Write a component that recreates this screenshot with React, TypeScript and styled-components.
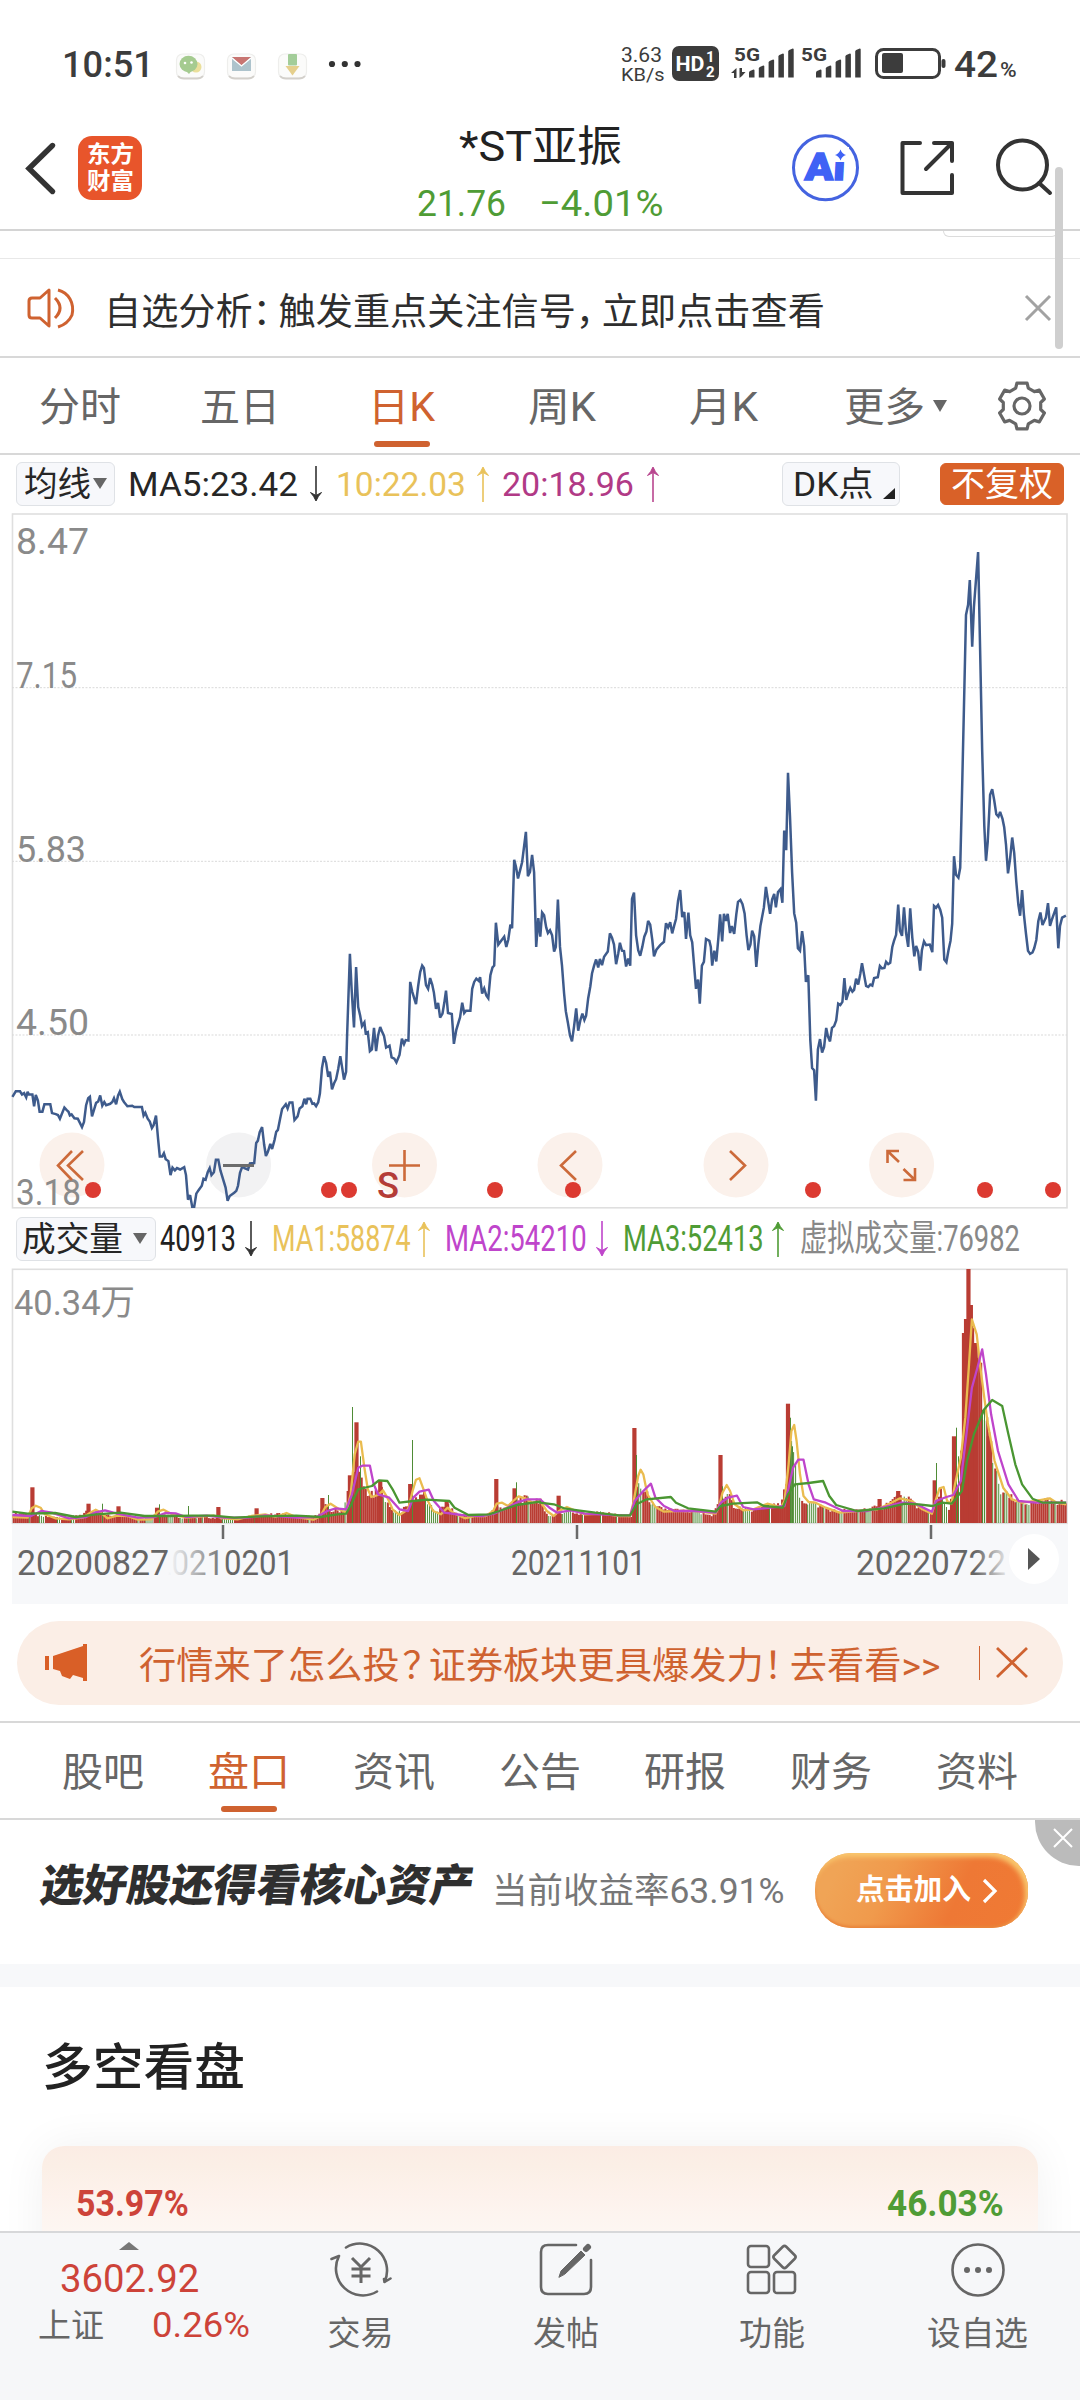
import React, { useLayoutEffect, useRef, useState } from 'react';
import styled, { createGlobalStyle } from 'styled-components';

const FONT = `Roboto, "Noto Sans CJK SC", "Noto Sans", sans-serif`;
const ORANGE = '#cf6230';
const GREY = '#666666';
const RED = '#cd4339';
const GREEN = '#4f9c35';
const YELLOW = '#e9c25a';
const MAGENTA = '#b9468f';
const VIOLET = '#bf45cb';

const Global = createGlobalStyle`
  html, body { margin: 0; padding: 0; background: #fff; }
  * { box-sizing: border-box; }
  body { font-family: ${FONT}; color: #2b2b2b; }
  svg { display: block; flex: none; }
`;

/* ---------- text that keeps an exact width ---------- */

const FitBox = styled.span<{ $w: number; $size: number; $ml: number; $color?: string; $weight: number }>`
  display: block;
  flex: none;
  width: ${p => p.$w}px;
  margin-left: ${p => p.$ml}px;
  height: ${p => Math.round(p.$size * 1.2)}px;
  line-height: ${p => Math.round(p.$size * 1.2)}px;
  font-size: ${p => p.$size}px;
  font-weight: ${p => p.$weight};
  color: ${p => p.$color ?? 'inherit'};
  white-space: nowrap;
`;
const FitInner = styled.span`
  display: inline-block;
  transform-origin: 0 70%;
`;
/* full-width punctuation set on a half-width body */
const Narrow = styled.span<{ $both: boolean }>`
  font-family: "Noto Sans CJK SC", sans-serif;
  font-feature-settings: 'halt';
  padding-right: 0.2em;
  padding-left: ${p => (p.$both ? 0.08 : 0)}em;
`;

type FitProps = {
  text: string; w: number; size: number; ml?: number; color?: string; weight?: number; skew?: number;
};
function Fit({ text, w, size, ml = 0, color, weight = 400, skew = 0 }: FitProps) {
  const ref = useRef<HTMLSpanElement>(null);
  const [k, setK] = useState(1);
  useLayoutEffect(() => {
    if (ref.current) setK(w / ref.current.offsetWidth);
  }, [text, w, size]);
  const parts = text.split(/([：，！？])/);
  return (
    <FitBox $w={w} $size={size} $ml={ml} $color={color} $weight={weight}>
      <FitInner ref={ref} style={{ transform: `scaleX(${k}) skewX(${-skew}deg)` }}>
        {parts.map((s, i) => (i % 2 ? <Narrow key={i} $both={s === '？'}>{s}</Narrow> : s))}
      </FitInner>
    </FitBox>
  );
}

/* ---------- frame ---------- */

const Screen = styled.div`
  width: 1080px;
  height: 2400px;
  display: flex;
  flex-direction: column;
  overflow: hidden;
  background: #fff;
  position: relative;
`;
const Content = styled.main`
  flex: 1;
  min-height: 0;
  overflow: hidden;
`;
const ScrollThumb = styled.div`
  position: absolute;
  left: 1055px;
  top: 167px;
  width: 8px;
  height: 182px;
  border-radius: 4px;
  background: #cfcfcf;
`;
const IconShift = styled.div<{ $ml: number }>`
  margin-left: ${p => p.$ml}px;
`;

/* ---------- status bar ---------- */

const StatusRow = styled.div`
  height: 129px;
  display: flex;
  align-items: center;
  padding-left: 62px;
  color: #3c3c3c;
`;
const Stack = styled.div<{ $ml: number }>`
  margin-left: ${p => p.$ml}px;
  display: flex;
  flex-direction: column;
  justify-content: center;
  height: 44px;
  span { height: 20px; line-height: 20px; }
`;
const Pct = styled.div`
  padding-top: 10px;
`;

function NotifyIcons() {
  return (
    <svg width="190" height="40" viewBox="172 45 190 40">
      <g stroke="#eeeeec" strokeWidth="1.2" fill="#fbfbfa">
        <rect x="176.500" y="54" width="28" height="24" rx="6" />
        <rect x="227.500" y="54" width="28" height="24" rx="6" />
        <rect x="278.500" y="54" width="28" height="24" rx="6" />
      </g>
      <path d="M178 76q2 2.500 6 2.500h13q4 0 6 -2.500M229 76q2 2.500 6 2.500h13q4 0 6 -2.500M280 76q2 2.500 6 2.500h13q4 0 6 -2.500" stroke="#d3d0cb" strokeWidth="1.800" fill="none" />
      <circle cx="196" cy="67" r="5.500" fill="#eadf9b" />
      <ellipse cx="188.500" cy="64" rx="9" ry="8.300" fill="#a5cb90" />
      <path d="M185 70l4 4l3 -4z" fill="#a5cb90" />
      <circle cx="185" cy="63" r="1.300" fill="#fff" />
      <circle cx="191.500" cy="62.500" r="1.300" fill="#fff" />
      <rect x="232" y="57" width="19" height="14" fill="#adc3cc" />
      <path d="M232 57h19l-9.500 8.500z" fill="#c87572" />
      <path d="M232 58l9.500 8l9.500 -8" stroke="#fff" strokeWidth="1.300" fill="none" />
      <rect x="288" y="54" width="9" height="11.500" rx="1" fill="#a3cd99" />
      <path d="M285.500 66h14l-7 9.500z" fill="#e5cf8c" />
      <g fill="#333">
        <circle cx="332" cy="64" r="3.100" />
        <circle cx="344.800" cy="64" r="3.100" />
        <circle cx="357.500" cy="64" r="3.100" />
      </g>
    </svg>
  );
}

function SignalIcons() {
  const bars = (x: number) =>
    [8, 12, 18, 24, 29].map((h, i) => (
      <path key={i} d={`M${x + i * 9.8} ${78.500 - h + 2}q0 -1 1 -1.500l3.500 -1.500q1 0 1 1v${h - 1}h-5.500z`} />
    ));
  return (
    <svg width="280" height="44" viewBox="670 43 280 44" fill="#3c3c3c">
      <rect x="672" y="46" width="47" height="35" rx="7" />
      <g fill="#fff" fontFamily={FONT} fontWeight="700">
        <text x="675.500" y="71" fontSize="21" textLength="29" lengthAdjust="spacingAndGlyphs">HD</text>
        <text x="706" y="62" fontSize="15">1</text>
        <text x="706" y="77" fontSize="15">2</text>
      </g>
      <g fontFamily={FONT} fontWeight="700" fontSize="19">
        <text x="734" y="61" textLength="26" lengthAdjust="spacingAndGlyphs">5G</text>
        <text x="801" y="61" textLength="26" lengthAdjust="spacingAndGlyphs">5G</text>
      </g>
      <path d="M736.500 68v10h-2.500v-5h-3zM739.500 78v-10h2.500v4h3.500l-3.500 4z" />
      {bars(749)}
      {bars(816)}
      <rect x="876.500" y="49.500" width="63" height="28" rx="7" fill="none" stroke="#3c3c3c" strokeWidth="3" />
      <rect x="882" y="53" width="21" height="20" rx="2" />
      <rect x="941.500" y="59" width="4" height="9" rx="2" />
    </svg>
  );
}

function StatusBar() {
  return (
    <StatusRow>
      <Fit text="10:51" w={92} size={37} weight={500} />
      <IconShift $ml={18}><NotifyIcons /></IconShift>
      <Stack $ml={259}>
        <Fit text="3.63" w={41} size={20} />
        <Fit text="KB/s" w={43} size={19} />
      </Stack>
      <IconShift $ml={6}><SignalIcons /></IconShift>
      <Fit text="42" w={44} size={37} ml={4} weight={500} />
      <Pct><Fit text="%" w={17} size={20} ml={2} weight={500} /></Pct>
    </StatusRow>
  );
}

/* ---------- header ---------- */

const HeaderRow = styled.header`
  height: 102px;
  border-bottom: 2px solid #d4d4d4;
  display: grid;
  grid-template-columns: 396px 288px 396px;
`;
const HeaderSide = styled.div<{ $pl: number; $gap: number }>`
  display: flex;
  align-items: center;
  height: 77px;
  padding-left: ${p => p.$pl}px;
  gap: ${p => p.$gap}px;
`;
const HeaderMid = styled.div`
  padding-left: 21px;
`;
const TitleLine = styled.div`
  height: 36px;
  padding-left: 42px;
  display: flex;
  align-items: center;
  color: #222;
`;
const PriceLine = styled.div`
  height: 77px;
  display: flex;
  align-items: center;
  color: ${GREEN};
`;
const Logo = styled.div`
  width: 64px;
  height: 64px;
  border-radius: 14px;
  background: #e8552b;
  color: #fff;
  display: flex;
  flex-direction: column;
  align-items: center;
  justify-content: center;
  span { height: 27px; line-height: 27px; }
`;

function AiIcon() {
  return (
    <svg width="68" height="68" viewBox="791 133 68 68">
      <circle cx="825.500" cy="166.800" r="32" fill="none" stroke="#4463e0" strokeWidth="3" />
      <g transform="translate(825 179) skewX(-3)">
        <text x="-20.500" y="0" fontFamily={FONT} fontWeight="900" fontSize="38" fill="#4062f5" stroke="#4062f5" strokeWidth="1.500" textLength="40" lengthAdjust="spacingAndGlyphs">Ai</text>
      </g>
      <rect x="833" y="146" width="16" height="15" fill="#fff" />
      <path d="M840.500 148.500q1.500 4.300 5.500 5.500q-4 1.300 -5.500 5.500q-1.500 -4.200 -5.500 -5.500q4 -1.200 5.500 -5.500z" fill="#4062f5" />
    </svg>
  );
}

function Header() {
  return (
    <HeaderRow>
      <HeaderSide $pl={20} $gap={18}>
        <svg width="40" height="60" viewBox="20 137 40 60">
          <path d="M52.500 144.500L29 167.500L52.500 190.500" fill="none" stroke="#333" strokeWidth="5.400" strokeLinecap="round" />
        </svg>
        <Logo>
          <Fit text="东方" w={47} size={23} weight={700} />
          <Fit text="财富" w={47} size={23} weight={700} />
        </Logo>
      </HeaderSide>
      <HeaderMid>
        <TitleLine><Fit text="*ST亚振" w={163} size={42} /></TitleLine>
        <PriceLine>
          <Fit text="21.76" w={89} size={37} />
          <Fit text="−4.01%" w={124} size={37} ml={33} />
        </PriceLine>
      </HeaderMid>
      <HeaderSide $pl={107} $gap={0}>
        <AiIcon />
        <IconShift $ml={38}>
          <svg width="60" height="60" viewBox="897 137 60 60" fill="none" stroke="#333" strokeWidth="4" strokeLinecap="round" strokeLinejoin="round">
            <path d="M920 142H902.500V192H952V174M934 142H952V160M952 142L926 168" />
          </svg>
        </IconShift>
        <IconShift $ml={36}>
          <svg width="62" height="62" viewBox="993 136 62 62" fill="none" stroke="#333" strokeWidth="4" strokeLinecap="round">
            <circle cx="1022.500" cy="164" r="24.500" />
            <path d="M1039 182L1050 192" />
          </svg>
        </IconShift>
      </HeaderSide>
    </HeaderRow>
  );
}

/* ---------- alert ---------- */

const Strip = styled.div`
  height: 28px;
  border-bottom: 1px solid #e8e8e8;
  padding-left: 943px;
`;
const StripTab = styled.div`
  width: 115px;
  height: 6px;
  border: 1px solid #dcdcdc;
  border-top: 0;
  border-radius: 0 0 6px 6px;
`;
const AlertRow = styled.div`
  height: 99px;
  border-bottom: 2px solid #d8d8d8;
  display: flex;
  align-items: center;
  padding-left: 24px;
`;
const AlertText = styled.div`
  padding-top: 3px;
`;
function Alert() {
  return (
    <AlertRow>
      <svg width="54" height="48" viewBox="24 284 54 48" fill="none" stroke={ORANGE} strokeWidth="3">
        <path d="M49 290L40 298H32q-3 0 -3 3V315q0 3 3 3H40L49 326Z" strokeLinejoin="round" />
        <path d="M55 298q10 10 0 20M58 290q8 2 12 9t2 16q-4 9 -14 12" />
      </svg>
      <AlertText>
        <Fit text="自选分析：触发重点关注信号，立即点击查看" w={721} size={37} ml={26} color="#2e2e2e" />
      </AlertText>
      <IconShift $ml={196}>
        <svg width="34" height="30" viewBox="1021 293 34 30" stroke="#a2a2a2" strokeWidth="3">
          <path d="M1026 296L1050 320M1050 296L1026 320" />
        </svg>
      </IconShift>
    </AlertRow>
  );
}

/* ---------- period tabs ---------- */

const TabRow = styled.nav<{ $pl: number }>`
  height: 97px;
  border-bottom: 2px solid #d8d8d8;
  display: flex;
  align-items: center;
  padding-left: ${p => p.$pl}px;
  color: ${GREY};
`;
const TabItem = styled.div<{ $ml: number; $active?: boolean }>`
  position: relative;
  height: 95px;
  padding-top: 26px;
  margin-left: ${p => p.$ml}px;
  color: ${p => (p.$active ? ORANGE : 'inherit')};
  &::after {
    content: '';
    display: ${p => (p.$active ? 'block' : 'none')};
    position: absolute;
    left: 50%;
    margin-left: -28px;
    bottom: 6px;
    width: 56px;
    height: 6px;
    border-radius: 3px;
    background: ${ORANGE};
  }
`;
const periods: [string, number, number][] = [
  ['分时', 82, 0], ['五日', 80, 79], ['日K', 67, 88], ['周K', 68, 93], ['月K', 69, 93], ['更多', 81, 86],
];
const GEAR = (() => {
  const out: string[] = [];
  for (let i = 0; i < 6; i++) {
    const a = (i * 60 - 90) * Math.PI / 180;
    [[-0.22, 23.500], [0.22, 23.500], [0.34, 19], [0.71, 19]].forEach(([d, r]) =>
      out.push(`${(r * Math.cos(a + d)).toFixed(1)},${(r * Math.sin(a + d)).toFixed(1)}`));
  }
  return out.join(' ');
})();
function PeriodTabs() {
  return (
    <TabRow $pl={39}>
      {periods.map(([t, w, ml]) => (
        <TabItem key={t} $ml={ml} $active={t === '日K'}><Fit text={t} w={w} size={40} /></TabItem>
      ))}
      <IconShift $ml={8}>
        <svg width="14" height="12" viewBox="0 0 14 12"><path d="M0 0H14L7 12Z" fill={GREY} /></svg>
      </IconShift>
      <IconShift $ml={48}>
        <svg width="54" height="54" viewBox="-27 -27 54 54" fill="none" stroke={GREY} strokeWidth="3.200" strokeLinejoin="round">
          <polygon points={GEAR} />
          <circle r="8" />
        </svg>
      </IconShift>
    </TabRow>
  );
}

/* ---------- indicator rows ---------- */

const IndicatorRow = styled.div`
  height: 58px;
  display: flex;
  align-items: center;
  padding-left: 16px;
`;
const Chip = styled.div<{ $w: number; $ml?: number; $solid?: boolean }>`
  width: ${p => p.$w}px;
  height: ${p => (p.$solid ? 42 : 44)}px;
  margin-left: ${p => p.$ml ?? 0}px;
  flex: none;
  border-radius: 6px;
  border: 1px solid ${p => (p.$solid ? '#d96128' : '#dfe2e6')};
  background: ${p => (p.$solid ? '#d96128' : '#f7f8fb')};
  color: ${p => (p.$solid ? '#fff' : '#262626')};
  display: flex;
  align-items: center;
  padding-left: ${p => (p.$solid ? 10 : 7)}px;
`;
const CornerMark = styled.div`
  margin-left: 9px;
  padding-top: 19px;
`;
function Caret({ ml }: { ml: number }) {
  return (
    <IconShift $ml={ml}>
      <svg width="14" height="12" viewBox="0 0 14 12"><path d="M0 0H14L7 11Z" fill={GREY} /></svg>
    </IconShift>
  );
}
function Arrow({ up, color, ml }: { up?: boolean; color: string; ml: number }) {
  return (
    <IconShift $ml={ml}>
      <svg width="14" height="40" viewBox="-7 0 14 40">
        <g transform={up ? 'rotate(180 0 20)' : undefined}>
          <path d="M0 2V36" stroke={color} strokeWidth="1.600" />
          <path d="M-5.500 28.500Q-2 32 0 37Q2 32 5.500 28.500L0 31.500Z" fill={color} stroke={color} strokeWidth="1" />
        </g>
      </svg>
    </IconShift>
  );
}
function MaRow() {
  return (
    <IndicatorRow>
      <Chip $w={99}><Fit text="均线" w={67} size={34} /><Caret ml={2} /></Chip>
      <Fit text="MA5:23.42" w={170} size={34} ml={13} color="#262626" />
      <Arrow color="#333" ml={11} />
      <Fit text="10:22.03" w={130} size={34} ml={13} color={YELLOW} />
      <Arrow up color={YELLOW} ml={10} />
      <Fit text="20:18.96" w={132} size={34} ml={12} color="#b13a86" />
      <Arrow up color={MAGENTA} ml={12} />
      <Chip $w={118} $ml={122}>
        <Fit text="DK点" w={81} size={34} ml={3} />
        <CornerMark><svg width="12" height="11" viewBox="0 0 12 11"><path d="M12 0V11H0Z" fill="#222" /></svg></CornerMark>
      </Chip>
      <Chip $w={124} $ml={40} $solid><Fit text="不复权" w={102} size={34} /></Chip>
    </IndicatorRow>
  );
}
function VolumeLegend() {
  return (
    <IndicatorRow>
      <Chip $w={140}><Fit text="成交量" w={101} size={34} ml={-2} /><Caret ml={10} /></Chip>
      <Fit text="40913" w={76} size={37} ml={4} color="#222" />
      <Arrow color="#333" ml={8} />
      <Fit text="MA1:58874" w={139} size={37} ml={14} color={YELLOW} />
      <Arrow up color={YELLOW} ml={6} />
      <Fit text="MA2:54210" w={142} size={37} ml={14} color={VIOLET} />
      <Arrow color={VIOLET} ml={8} />
      <Fit text="MA3:52413" w={141} size={37} ml={14} color={GREEN} />
      <Arrow up color={GREEN} ml={7} />
      <Fit text="虚拟成交量:76982" w={220} size={36} ml={15} color="#888" />
    </IndicatorRow>
  );
}

/* ---------- price chart ---------- */

const PRICE_A = '36,1282 46,1270 58,1270 64,1277 70,1274 76,1283 80,1271 84,1277 94,1277 99,1302 104,1278 110,1290 115,1314 123,1314 129,1298 146,1298 151,1317 162,1319 168,1321 174,1329 187,1305 193,1310 199,1314 203,1322 208,1320 216,1328 226,1329 238,1347 244,1336 250,1300 256,1285 261,1282 267,1324 273,1310 279,1295 285,1292 291,1279 297,1301 303,1293 308,1300 320,1297 326,1293 331,1285 337,1298 343,1279 348,1271 355,1287 360,1293 370,1302 384,1301 390,1304 412,1304 417,1322 422,1316 429,1329 435,1335 441,1349 446,1343 453,1322 459,1373 464,1410 471,1410 476,1403 481,1416 489,1420 495,1450 501,1434 508,1440 514,1435 523,1438 535,1433 540,1450 546,1503 552,1493 558,1518 564,1518 570,1490 576,1483 586,1473 591,1458 597,1460 603,1444 609,1435 614,1450 621,1444 627,1417 634,1417 640,1440 655,1477 661,1505 667,1495 680,1488 686,1484 691,1473 697,1445 704,1431 710,1435 720,1438 726,1425 738,1424 744,1381 749,1376 754,1358 761,1347 767,1384 772,1409 778,1400 785,1383 790,1394 797,1375 802,1357 807,1353 813,1330 819,1308 830,1298 835,1307 841,1294 849,1294 855,1332 864,1324 870,1307 878,1302 884,1286 889,1298 893,1286 901,1286 907,1297 912,1296 918,1302 924,1294 929,1275 935,1220 941,1195 947,1209 953,1239 958,1228 964,1266 970,1253 976,1244 982,1222 988,1195 993,1217 999,1245 1005,1228 1008,1150 1016,975 1021,1050 1028,1133 1034,1003 1040,1089 1046,1108 1051,1130 1058,1122 1062,1145 1068,1143 1074,1184 1080,1180 1086,1134 1092,1184 1098,1150 1104,1132 1109,1141 1115,1151 1121,1176 1131,1172 1137,1197 1145,1200 1151,1208 1160,1192 1167,1157 1173,1169 1178,1160 1186,1161 1191,1035 1197,1056 1208,1083 1214,1045 1220,1014 1226,1000 1231,1005 1237,1042 1243,1050 1249,1027 1255,1041 1260,1058 1266,1093 1272,1080 1278,1112 1285,1103 1290,1080 1295,1054 1301,1102 1312,1104 1318,1168 1325,1138 1336,1111 1342,1080 1348,1102 1353,1097 1366,1097 1371,1050 1377,1035 1383,1028 1390,1033 1394,1025 1400,1060 1406,1049 1412,1064 1418,1070 1424,1021 1430,1004 1435,1000 1440,908 1447,955 1458,944 1464,938 1470,960 1476,944 1482,912 1487,920 1493,773 1498,787 1504,813 1510,796 1516,778 1527,713 1533,808 1539,799 1545,762 1551,800 1557,960 1563,898';
const PRICE_B = '1,938 6,886 12,892 18,918 23,930 29,924 35,935 41,970 46,960 52,858 58,960 64,1000 70,1060 75,1098 81,1123 87,1150 93,1163 99,1130 105,1092 111,1140 117,1118 123,1103 129,1117 134,1108 140,1070 146,1045 151,1017 157,1000 163,987 169,1004 174,986 180,999 186,981 197,970 203,931 209,940 215,955 221,997 227,975 232,951 238,968 244,969 250,1002 256,985 262,1000 267,857 273,843 279,935 285,967 291,979 297,960 303,938 309,927 314,904 320,912 326,945 331,980 338,966 349,956 360,949 366,909 372,918 378,907 384,931 390,913 395,900 401,860 407,838 413,896 419,885 424,943 431,886 436,935 442,950 448,1005 453,1050 459,1030 464,1082 470,1000 476,992 482,943 492,947 496,960 500,1000 506,968 512,991 518,940 523,890 529,948 534,889 540,904 545,889 552,930 557,915 564,932 570,890 575,863 582,859 588,868 594,888 600,935 605,967 611,955 616,925 622,937 628,1003 634,955 640,915 650,875 656,831 662,860 668,889 674,858 680,846 685,875 691,842 698,836 704,865 709,710 715,752 720,586 726,680 732,800 738,888 744,908 749,963 755,968 761,926 767,958 772,1035 779,1021 785,1160 790,1220 796,1225 801,1290 807,1180 813,1158 819,1187 825,1175 831,1134 836,1152 842,1163 848,1134 854,1130 860,1118 866,1082 872,1085 878,1078 884,1027 889,1074 895,1060 901,1048 907,1056 912,1052 918,1028 924,1041 930,1018 935,995 941,1020 947,1044 953,1046 959,1041 965,1043 970,1027 981,1025 987,1001 993,1006 1000,1005 1005,992 1011,997 1017,994 1023,960 1028,947 1034,934 1040,869 1045,925 1051,936 1057,875 1063,930 1069,960 1075,877 1081,940 1087,980 1092,958 1098,970 1104,1011 1109,967 1115,948 1121,956 1132,955 1139,971 1144,872 1150,876 1156,870 1162,880 1168,897 1174,987 1180,993 1186,968 1192,947 1197,910 1202,765 1208,805 1215,811 1220,790 1225,640 1231,450 1237,247 1243,225 1248,172 1255,315 1260,230 1272,112 1278,320 1284,540 1290,700 1295,775 1300,735 1307,633 1313,621 1319,645 1325,675 1331,680 1336,670 1343,685 1348,703 1353,740 1359,802 1365,770 1371,725 1377,758 1383,820 1389,870 1394,893 1400,838 1405,890 1411,930 1417,968 1423,975 1430,972 1435,963 1441,945 1447,905 1453,886 1459,913 1469,897 1475,866 1481,915 1487,900 1499,875 1505,963 1510,915 1516,897 1527,893';

const SX = 540 / 1568;
/* joins the two halves of a series into one list of screen points */
function series(a: string, b: string, y0: number, ky: number): [number, number][] {
  const read = (s: string, dx: number) =>
    s.split(' ').map(p => {
      const [x, y] = p.split(',').map(Number);
      return [x * SX + dx, y0 + y * ky] as [number, number];
    });
  return [...read(a, 0), ...read(b, 540)];
}
const toPoints = (list: [number, number][]) => list.map(p => `${p[0].toFixed(1)},${p[1].toFixed(1)}`).join(' ');
const pricePoints = toPoints(series(PRICE_A, PRICE_B, 500, 730 / 1568));

const labels: [string, number, number][] = [
  ['8.47', 554, 73], ['7.15', 688, 61], ['5.83', 862, 70], ['4.50', 1035, 73], ['3.18', 1205, 65],
];

function PriceChart() {
  return (
    <svg width="1080" height="697" viewBox="0 513 1080 697" fontFamily={FONT}>
      <rect x="12.500" y="514" width="1054.500" height="693.800" fill="none" stroke="#dfdfdf" strokeWidth="1.600" />
      {[687.700, 861.300, 1035].map(y => (
        <path key={y} d={`M12 ${y}H1067`} stroke="#d9d9d9" strokeWidth="1" strokeDasharray="2 1.500" />
      ))}
      {[72, 238.600, 404.500, 570, 736, 901.600].map((x, i) => (
        <circle key={x} cx={x} cy="1165" r="32.500" fill={i === 1 ? '#f2f2f3' : '#fbf1eb'} />
      ))}
      {labels.map(([t, y, w]) => (
        <text key={t} x="16" y={y} fontSize="37.500" fill="#8a8a8a" textLength={w} lengthAdjust="spacingAndGlyphs">{t}</text>
      ))}
      <polyline points={pricePoints} fill="none" stroke="#3e5b8c" strokeWidth="2.500" strokeLinejoin="miter" strokeMiterlimit="3" />
      <g fill="none" stroke="#cc6a3a" strokeWidth="2.600">
        <path d="M72 1151L58 1165.500L72 1180M83 1151L68 1165.500L83 1180" />
        <path d="M389 1165.500H420M404.500 1150V1181" />
        <path d="M576 1151L561 1165.500L576 1180" />
        <path d="M730 1151L745 1165.500L730 1180" />
        <path d="M887.500 1163V1151H899M887.500 1151L899 1162M915 1168V1180H903.500M915 1180L903.500 1169" />
      </g>
      <path d="M223 1165.500H254" stroke="#6c6c6c" strokeWidth="3" />
      {[93, 329, 349, 495, 573, 813, 985, 1053].map(x => (
        <circle key={x} cx={x} cy="1190" r="8" fill="#dc3a31" />
      ))}
      <text x="377" y="1198" fontSize="37" fontWeight="500" fill="#b43c37" textLength="22" lengthAdjust="spacingAndGlyphs">S</text>
    </svg>
  );
}

/* ---------- volume chart ---------- */

const envelope: [number, number][] = [
  [36, 30], [90, 30], [120, 20], [200, 16], [250, 34], [290, 30], [330, 24], [370, 24], [420, 14], [450, 30], [490, 24], [530, 16], [600, 18], [650, 12], [700, 18], [760, 24], [820, 30], [860, 18], [915, 22], [940, 54], [960, 38], [995, 40], [1010, 110], [1030, 170], [1060, 100], [1080, 84], [1110, 105], [1125, 50], [1140, 38], [1165, 38], [1190, 66], [1225, 96], [1245, 54], [1265, 38], [1295, 54], [1330, 24], [1410, 26], [1440, 48], [1480, 54], [1500, 76], [1530, 74], [1568, 74],
  [1575, 34], [1600, 22], [1650, 36], [1700, 26], [1730, 34], [1770, 28], [1830, 20], [1840, 95], [1850, 125], [1878, 84], [1900, 48], [1960, 40], [2010, 34], [2065, 24], [2085, 64], [2110, 94], [2130, 48], [2190, 40], [2220, 54], [2260, 54], [2285, 165], [2300, 235], [2318, 94], [2330, 70], [2380, 54], [2420, 38], [2500, 42], [2560, 50], [2600, 80], [2640, 70], [2670, 46], [2705, 32], [2716, 84], [2730, 94], [2750, 34], [2768, 104], [2785, 115], [2796, 500], [2815, 620], [2845, 470], [2858, 320], [2880, 210], [2900, 105], [2930, 80], [2950, 68], [3000, 62], [3050, 72], [3098, 60],
];
const spikes: Record<string, number> = {
  94: 107, 257: 58, 344: 50, 456: 46, 634: 48, 745: 44, 936: 75, 1016: 143, 1035: 302, 1104: 128, 1191: 117, 1297: 68, 1441: 132, 1494: 104,
  1622: 82, 1842: 285, 2092: 204, 2288: 358, 2554: 72, 2608: 96, 2714: 128, 2770: 260, 2799: 570, 2805: 612, 2812: 762, 2819: 654, 2833: 540, 2871: 260,
};
const greenSpikes: Record<string, number> = {
  298: 58, 547: 51, 463: 56, 954: 84, 1023: 348, 1047: 200, 1198: 249, 1499: 122, 1849: 204, 2097: 110, 2295: 316, 2301: 230, 2719: 180, 2777: 286, 2783: 200, 2853: 340, 2859: 340,
};
const greenRuns: [number, number][] = [
  [112, 126], [160, 174], [206, 218], [420, 442], [486, 500], [520, 530], [640, 668], [1110, 1122], [1140, 1162], [1234, 1270], [1360, 1366], [1585, 1600], [1630, 1660], [1852, 1862], [1888, 1902], [2006, 2040], [2156, 2172], [2296, 2322], [2342, 2368], [2510, 2526], [2616, 2630], [2730, 2744], [2850, 2862], [2892, 2905], [2912, 2926], [2950, 2962], [2975, 2990],
];
function envAt(x: number) {
  for (let i = 1; i < envelope.length; i++) {
    if (x <= envelope[i][0]) {
      const [x0, h0] = envelope[i - 1];
      const [x1, h1] = envelope[i];
      return h0 + ((h1 - h0) * (x - x0)) / (x1 - x0);
    }
  }
  return 58;
}
const noise = (i: number) => {
  const v = Math.sin(i * 12.9898) * 43758.5453;
  return v - Math.floor(v);
};
type Bar = { x: number; w: number; h: number; green: boolean };
const bars: Bar[] = [];
for (let i = 0, x = 37; x < 3092; x += 5.84, i++) {
  const green = greenRuns.some(([a, b]) => x >= a && x <= b) || noise(i + 700) > 0.93;
  const h = envAt(x) * (0.78 + 0.34 * noise(i));
  bars.push({ x: x * SX, w: green ? 1 : 2.05, h: h / 3, green });
}
Object.entries(spikes).forEach(([x, h]) => bars.push({ x: (Number(x) - 6) * SX, w: 4.200, h: h / 3, green: false }));
Object.entries(greenSpikes).forEach(([x, h]) => bars.push({ x: Math.round((Number(x) - 1) * SX), w: 1, h: h / 3, green: true }));

const MA_YELLOW = series(
  '36,948 80,950 92,922 104,914 118,920 130,940 160,952 200,955 240,950 262,935 278,926 292,934 312,952 340,944 370,945 400,956 440,955 458,932 475,926 500,940 540,950 590,946 620,944 650,952 690,955 730,945 770,940 800,948 832,936 860,948 910,956 930,946 945,918 960,908 985,925 1005,935 1018,880 1030,760 1040,722 1048,722 1058,800 1068,865 1078,888 1098,882 1112,868 1125,890 1140,925 1160,942 1185,925 1198,870 1208,836 1218,832 1228,860 1240,895 1258,930 1280,940 1300,920 1315,935 1350,952 1380,945 1410,945 1432,930 1442,908 1458,905 1475,915 1490,900 1506,886 1525,892 1545,905 1568,900',
  '20,930 40,945 55,930 78,918 100,928 130,940 180,938 230,945 262,945 272,900 285,825 292,806 300,820 312,880 335,918 360,932 400,930 450,930 510,938 520,915 530,875 542,852 552,870 565,910 590,928 620,925 660,908 700,918 710,900 722,790 730,690 738,672 745,720 755,820 765,885 780,903 800,905 830,920 870,935 920,930 980,925 1020,905 1045,892 1080,900 1110,925 1138,938 1150,895 1160,862 1172,858 1182,900 1195,908 1205,850 1222,770 1235,650 1245,500 1254,355 1268,400 1280,510 1290,590 1300,665 1320,780 1345,860 1370,895 1400,905 1440,900 1480,892 1500,905 1528,910',
  1200, 1 / 3);
const MA_VIOLET = series(
  '36,942 90,945 120,930 150,935 200,952 250,948 275,935 305,928 340,938 400,950 450,948 480,936 510,937 540,948 600,944 650,950 720,950 770,943 860,950 920,948 950,930 975,922 1005,925 1022,880 1040,800 1052,794 1074,794 1085,850 1098,880 1130,890 1160,925 1185,930 1200,890 1218,872 1245,866 1260,900 1290,935 1340,942 1400,945 1435,938 1470,922 1500,905 1530,895 1568,895',
  '30,922 50,935 90,928 130,938 230,943 262,943 275,900 300,870 322,848 335,890 360,915 390,930 450,930 510,935 525,905 545,890 572,884 590,918 620,925 670,920 710,915 722,860 735,800 750,776 765,776 780,850 795,895 830,905 880,930 950,930 1000,918 1050,905 1090,908 1138,932 1150,900 1180,888 1200,882 1222,840 1238,700 1254,560 1270,500 1284,445 1295,520 1310,640 1330,750 1360,850 1390,900 1440,905 1528,905',
  1200, 1 / 3);
const MA_GREEN = series(
  '36,932 80,938 160,936 220,948 280,940 350,935 420,945 500,945 560,944 620,944 680,950 760,946 860,944 930,948 980,940 1005,938 1020,910 1040,865 1080,855 1100,838 1125,840 1140,865 1160,905 1200,900 1240,896 1305,900 1320,920 1360,942 1420,940 1450,930 1500,912 1568,902',
  '0,905 40,910 70,922 110,928 160,935 230,943 262,943 280,910 310,895 380,888 395,905 430,922 510,932 525,915 560,908 630,904 650,915 705,920 720,880 740,850 780,846 822,840 840,885 860,912 920,930 1000,922 1060,908 1100,910 1140,915 1170,905 1195,908 1225,870 1240,780 1260,700 1290,625 1313,597 1342,615 1360,700 1380,790 1400,850 1430,893 1460,905 1528,905',
  1200, 1 / 3);

function VolumeChart() {
  return (
    <svg width="1080" height="336" viewBox="0 1267 1080 336" fontFamily={FONT}>
      <defs>
        <linearGradient id="fadeL" gradientUnits="userSpaceOnUse" x1="168" x2="228" y1="0" y2="0">
          <stop offset="0" stopColor="#666" stopOpacity="0" />
          <stop offset="1" stopColor="#666" />
        </linearGradient>
        <linearGradient id="fadeR" gradientUnits="userSpaceOnUse" x1="975" x2="1008" y1="0" y2="0">
          <stop offset="0" stopColor="#666" />
          <stop offset="1" stopColor="#666" stopOpacity="0.1" />
        </linearGradient>
      </defs>
      <rect x="12" y="1523" width="1056" height="80" fill="#f7f8fa" />
      <rect x="12.500" y="1268.300" width="1054.500" height="254" fill="#fff" stroke="#dfdfdf" strokeWidth="1.600" />
      <text x="14" y="1314" fontSize="35" fill="#8a8a8a" textLength="121" lengthAdjust="spacingAndGlyphs">40.34万</text>
      {bars.map((b, i) => (
        <rect key={i} x={b.x.toFixed(2)} y={(1522 - b.h).toFixed(1)} width={b.w} height={b.h.toFixed(1)} fill={b.green ? '#4f8c36' : '#b93c33'} />
      ))}
      <g fill="none" strokeWidth="2.300" strokeLinejoin="round">
        <polyline points={toPoints(MA_YELLOW)} stroke="#eabc4f" />
        <polyline points={toPoints(MA_VIOLET)} stroke={VIOLET} />
        <polyline points={toPoints(MA_GREEN)} stroke="#4a9632" />
      </g>
      <path d="M223 1524V1538M577 1524V1538M931 1524V1538" stroke="#6a6a6a" strokeWidth="2.500" />
      <g fontSize="34.500" fill="#666">
        <text x="17" y="1574" textLength="152" lengthAdjust="spacingAndGlyphs">20200827</text>
        <text x="154" y="1574" fill="url(#fadeL)" textLength="140" lengthAdjust="spacingAndGlyphs">20210201</text>
        <text x="511" y="1574" textLength="135" lengthAdjust="spacingAndGlyphs">20211101</text>
        <text x="856" y="1574" fill="url(#fadeR)" textLength="150" lengthAdjust="spacingAndGlyphs">20220722</text>
      </g>
      <circle cx="1034" cy="1558" r="25" fill="#fff" />
      <path d="M1028 1547V1569L1040 1558Z" fill="#555" />
    </svg>
  );
}

/* ---------- promo banner ---------- */

const Banner = styled.div`
  margin: 17px 17px 16px;
  height: 84px;
  border-radius: 42px;
  background: #fbeee6;
  display: flex;
  align-items: center;
`;
const BannerLine = styled.div`
  width: 1px;
  height: 34px;
  margin-left: 39px;
  background: ${ORANGE};
`;
function PromoBanner() {
  return (
    <Banner>
      <IconShift $ml={24}>
        <svg width="52" height="44" viewBox="41 1640 52 44" fill="#d95f27">
          <rect x="45" y="1655" width="4" height="14" />
          <path d="M53 1655L83 1645V1643H87V1680H83V1677L73 1674L70 1678L62 1675L60 1670L53 1668Z" />
        </svg>
      </IconShift>
      <Fit text="行情来了怎么投？证券板块更具爆发力！去看看>>" w={801} size={37} ml={46} color={ORANGE} />
      <BannerLine />
      <IconShift $ml={13}>
        <svg width="38" height="38" viewBox="993 1643 38 38" stroke={ORANGE} strokeWidth="2.800">
          <path d="M997 1647L1027 1676M1027 1647L997 1676" />
        </svg>
      </IconShift>
    </Banner>
  );
}

/* ---------- info tabs ---------- */

const InfoTabs = styled(TabRow)`
  height: 99px;
  border-top: 2px solid #d8d8d8;
`;
const infoTabs = ['股吧', '盘口', '资讯', '公告', '研报', '财务', '资料'];

/* ---------- advert ---------- */

const Ad = styled.section`
  position: relative;
  height: 144px;
  display: flex;
  align-items: flex-start;
  padding-left: 39px;
`;
const AdClose = styled.div`
  position: absolute;
  right: 0;
  top: 0;
  width: 45px;
  height: 46px;
  border-bottom-left-radius: 44px;
  background: #bbb;
`;
const AdTitle = styled.div`
  padding-top: 40px;
`;
const AdSub = styled.div`
  padding-top: 51px;
`;
const JoinButton = styled.div`
  width: 213px;
  height: 75px;
  margin: 33px 0 0 30px;
  border-radius: 36px;
  background: linear-gradient(115deg, #f0a456 12%, #f09a4c 35%, #ee7835 66%, #f07a34 100%);
  box-shadow: inset -3px 4px 5px #f9c76e, inset 0 -2px 3px #e9843b;
  color: #fff;
  display: flex;
  align-items: center;
  padding-left: 41px;
`;
const Band = styled.div`
  height: 23px;
  background: #f7f8fa;
`;

/* ---------- long/short card ---------- */

const Section = styled.section`
  padding: 51px 42px 0;
`;
const Card = styled.div`
  margin-top: 48px;
  height: 200px;
  border-radius: 22px;
  background: linear-gradient(#fbece4 0, #fbefe6 20px, #fdf2ec 50px, #fdf7f3 90px);
  box-shadow: 0 0 45px rgba(0, 0, 0, 0.06);
  display: flex;
  justify-content: space-between;
  padding: 37px 34px 0 34px;
`;

/* ---------- bottom navigation ---------- */

const BottomBar = styled.footer`
  height: 169px;
  flex: none;
  position: relative;
  background: #f6f7f9;
  border-top: 2px solid #d7d8da;
  display: grid;
  grid-template-columns: 258px 205px 206px 206px 205px;
`;
const IndexCell = styled.div`
  padding: 9px 0 0 38px;
  display: flex;
  flex-direction: column;
  color: ${RED};
`;
const IndexTop = styled.div`
  margin-top: 6px;
`;
const IndexRow = styled.div`
  display: flex;
  align-items: center;
  margin-top: 3px;
`;
const NavItem = styled.div`
  display: flex;
  flex-direction: column;
  align-items: center;
  padding-top: 6px;
  gap: 13px;
  color: ${GREY};
`;
function NavIcon({ kind }: { kind: number }) {
  return (
    <svg width="68" height="62" viewBox="-34 -31 68 62" fill="none" stroke={GREY} strokeWidth="2.600" strokeLinecap="round" strokeLinejoin="round">
      {kind === 0 && (
        <>
          <path d="M-15 -22.500A27 27 0 0 1 23.500 12L29.500 8.500M23.500 12L23 9M16 21.500A27 27 0 0 1 -22 -14L-29.500 -11" />
          <path d="M-9 -12L0 -3L9 -12M0 -3V13M-9.500 -1H9.500M-9.500 6H9.500" strokeLinecap="butt" strokeWidth="3" />
        </>
      )}
      {kind === 1 && (
        <>
          <path d="M10 -25H-18Q-25 -25 -25 -18V17Q-25 24 -18 24H18Q25 24 25 17V-10" />
          <path d="M-7 7L-5 1L15 -19L19 -15L-1 4Z" fill={GREY} strokeWidth="1" />
          <path d="M20 -21L22 -23" strokeWidth="6" />
        </>
      )}
      {kind === 2 && (
        <>
          <rect x="-24" y="-24" width="21" height="21" rx="3" />
          <rect x="-24" y="2" width="21" height="21" rx="3" />
          <rect x="2" y="2" width="21" height="21" rx="3" />
          <rect x="-8.500" y="-8.500" width="17" height="17" rx="2.500" transform="translate(12.500 -13) rotate(45)" />
        </>
      )}
      {kind === 3 && (
        <>
          <circle r="25.500" />
          <g fill={GREY} stroke="none"><circle cx="-11" r="3" /><circle r="3" /><circle cx="11" r="3" /></g>
        </>
      )}
    </svg>
  );
}
const navItems: [string, number][] = [['交易', 66], ['发帖', 66], ['功能', 66], ['设自选', 101]];

export default function App() {
  return (
    <Screen>
      <Global />
      <Content>
        <StatusBar />
        <Header />
        <Strip><StripTab /></Strip>
        <Alert />
        <PeriodTabs />
        <MaRow />
        <PriceChart />
        <VolumeLegend />
        <VolumeChart />
        <PromoBanner />
        <InfoTabs $pl={62}>
          {infoTabs.map((t, i) => (
            <TabItem key={t} $ml={i ? 63.600 : 0} $active={i === 1}><Fit text={t} w={82} size={40} /></TabItem>
          ))}
        </InfoTabs>
        <Ad>
          <AdTitle><Fit text="选好股还得看核心资产" w={433} size={44} weight={900} skew={9} color="#2f2f2f" /></AdTitle>
          <AdSub><Fit text="当前收益率63.91%" w={293} size={35} ml={20} color="#777" /></AdSub>
          <JoinButton>
            <Fit text="点击加入" w={115} size={29} weight={700} />
            <IconShift $ml={10}>
              <svg width="18" height="26" viewBox="0 0 18 26"><path d="M3 2L14 13L3 24" fill="none" stroke="#fff" strokeWidth="3.200" /></svg>
            </IconShift>
          </JoinButton>
          <AdClose>
            <svg width="45" height="46" viewBox="1035 1817 45 46" stroke="#fff" strokeWidth="2"><path d="M1054 1826L1072 1844M1072 1826L1054 1844" /></svg>
          </AdClose>
        </Ad>
        <Band />
        <Section>
          <Fit text="多空看盘" w={203} size={50} weight={500} color="#222" />
          <Card>
            <Fit text="53.97%" w={113} size={36} weight={700} color={RED} />
            <Fit text="46.03%" w={117} size={36} weight={700} color={GREEN} />
          </Card>
        </Section>
      </Content>
      <BottomBar>
        <IndexCell>
          <IconShift $ml={81}>
            <svg width="20" height="8" viewBox="0 0 20 8"><path d="M0 8H20L10 0Z" fill="#777" /></svg>
          </IconShift>
          <IndexTop><Fit text="3602.92" w={139} size={38} ml={22} /></IndexTop>
          <IndexRow>
            <Fit text="上证" w={66} size={33} color={GREY} />
            <Fit text="0.26%" w={98} size={35} ml={48} />
          </IndexRow>
        </IndexCell>
        {navItems.map(([t, w], i) => (
          <NavItem key={t}>
            <NavIcon kind={i} />
            <Fit text={t} w={w} size={33} />
          </NavItem>
        ))}
      </BottomBar>
      <ScrollThumb />
    </Screen>
  );
}
